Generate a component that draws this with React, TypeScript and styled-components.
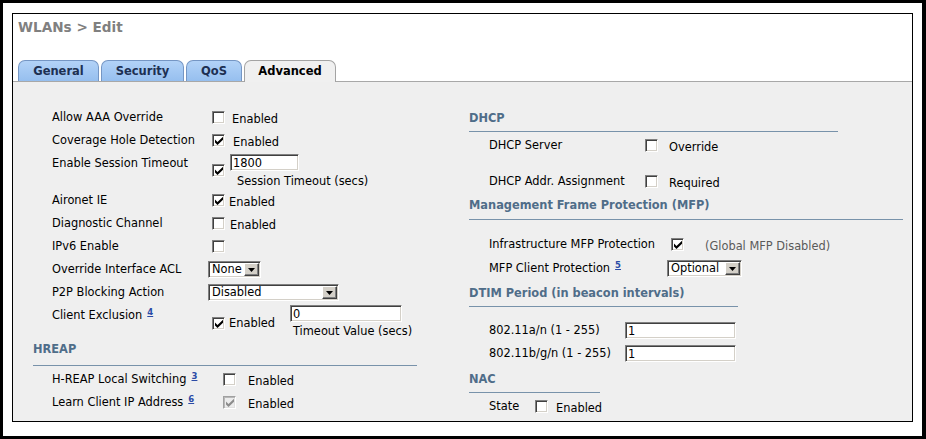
import styled, { createGlobalStyle } from 'styled-components';

const GlobalStyle = createGlobalStyle`
  html, body {
    margin: 0;
    padding: 0;
    background: #fff;
  }
  body {
    font-family: "DejaVu Sans", Verdana, sans-serif;
    font-size: 11.4px;
    color: #000;
  }
`;

const tabs = [
  { name: 'General', width: 81 },
  { name: 'Security', width: 83 },
  { name: 'QoS', width: 56 },
  { name: 'Advanced', width: 92, active: true },
];

const CheckMark = () => (
  <svg width="8" height="8" viewBox="0 0 7 7">
    <polygon points="0,2.2 2.2,4.4 7,-0.2 7,2.4 2.2,7 0,4.8" fill="currentColor" />
  </svg>
);

const Arrow = () => (
  <svg width="7" height="4" viewBox="0 0 7 4">
    <polygon points="0,0 7,0 3.5,4" fill="#000" />
  </svg>
);

const Check = ({ checked, disabled, top = 0 }: { checked?: boolean; disabled?: boolean; top?: number }) => (
  <CheckBox $disabled={disabled} $top={top}>
    {checked && <CheckMark />}
  </CheckBox>
);

const Dropdown = ({ value, width }: { value: string; width: number }) => (
  <Select $w={width}>
    <SelectText>{value}</SelectText>
    <SelectButton>
      <Arrow />
    </SelectButton>
  </Select>
);

export default function App() {
  return (
    <>
      <GlobalStyle />
      <Frame>
        <Window>
          <Title>WLANs &gt; Edit</Title>
          <TabBar>
            {tabs.map(t => (
              <Tab key={t.name} $w={t.width} $active={t.active}>{t.name}</Tab>
            ))}
          </TabBar>
          <Panel>
            <Column $w={436}>
              <Row $label={156} $h={23}>
                <Label>Allow AAA Override</Label>
                <Cell><Check /><Caption $gap={7}>Enabled</Caption></Cell>
              </Row>
              <Row $label={156} $h={23}>
                <Label>Coverage Hole Detection</Label>
                <Cell><Check checked /><Caption $gap={8}>Enabled</Caption></Cell>
              </Row>
              <Row $label={156} $h={37}>
                <Label>Enable Session Timeout</Label>
                <Stacked>
                  <Check checked top={12} />
                  <Stack $left={5}>
                    <TextField $w={69} defaultValue="1800" />
                    <SubCaption>Session Timeout (secs)</SubCaption>
                  </Stack>
                </Stacked>
              </Row>
              <Row $label={156} $h={23}>
                <Label>Aironet IE</Label>
                <Cell><Check checked /><Caption $gap={4}>Enabled</Caption></Cell>
              </Row>
              <Row $label={156} $h={23}>
                <Label>Diagnostic Channel</Label>
                <Cell><Check /><Caption $gap={5}>Enabled</Caption></Cell>
              </Row>
              <Row $label={156} $h={23}>
                <Label>IPv6 Enable</Label>
                <Cell><Check /></Cell>
              </Row>
              <Row $label={156} $h={23}>
                <Label>Override Interface ACL</Label>
                <Cell><Dropdown value="None" width={53} /></Cell>
              </Row>
              <Row $label={156} $h={23}>
                <Label>P2P Blocking Action</Label>
                <Cell><Dropdown value="Disabled" width={131} /></Cell>
              </Row>
              <Row $label={156} $h={38}>
                <Label>Client Exclusion<Sup href="#">4</Sup></Label>
                <Stacked>
                  <Check checked top={13} />
                  <FixedCaption $w={65}>Enabled</FixedCaption>
                  <Stack $left={0}>
                    <TextField $w={112} defaultValue="0" $top={1} />
                    <SubCaption $left={3} $gap={3}>Timeout Value (secs)</SubCaption>
                  </Stack>
                </Stacked>
              </Row>
              <Heading $w={384} $pad={8} $after={2}>HREAP</Heading>
              <Row $label={167} $h={23}>
                <Label>H-REAP Local Switching<Sup href="#">3</Sup></Label>
                <Cell><Check /><Caption $gap={12}>Enabled</Caption></Cell>
              </Row>
              <Row $label={167} $h={23}>
                <Label>Learn Client IP Address<Sup href="#">6</Sup></Label>
                <Cell><Check checked disabled /><Caption $gap={12}>Enabled</Caption></Cell>
              </Row>
            </Column>

            <Column>
              <Heading $w={369} $top={5} $pad={5} $after={2}>DHCP</Heading>
              <Row $label={152} $h={36} $indent={20}>
                <Label>DHCP Server</Label>
                <Cell><Check /><Caption $gap={11}>Override</Caption></Cell>
              </Row>
              <Row $label={152} $h={23} $indent={20}>
                <Label>DHCP Addr. Assignment</Label>
                <Cell><Check /><Caption $gap={11}>Required</Caption></Cell>
              </Row>
              <Heading $w={434} $top={5} $pad={6} $after={13}>Management Frame Protection (MFP)</Heading>
              <Row $label={178} $h={24} $indent={20}>
                <Label>Infrastructure MFP Protection</Label>
                <Cell><Check checked /><Caption $gap={21} $muted>(Global MFP Disabled)</Caption></Cell>
              </Row>
              <Row $label={178} $h={23} $indent={20}>
                <Label>MFP Client Protection<Sup href="#">5</Sup></Label>
                <Cell><Dropdown value="Optional" width={75} /></Cell>
              </Row>
              <Heading $w={269} $top={6} $pad={5} $after={12}>DTIM Period (in beacon intervals)</Heading>
              <Row $label={136} $h={23} $indent={20}>
                <Label>802.11a/n (1 - 255)</Label>
                <Cell><TextField $w={111} defaultValue="1" /></Cell>
              </Row>
              <Row $label={136} $h={23} $indent={20}>
                <Label>802.11b/g/n (1 - 255)</Label>
                <Cell><TextField $w={111} defaultValue="1" /></Cell>
              </Row>
              <Heading $w={131} $top={7} $pad={5} $after={2}>NAC</Heading>
              <Row $label={42} $h={23} $indent={20}>
                <Label>State</Label>
                <Cell><Check /><Caption $gap={8}>Enabled</Caption></Cell>
              </Row>
            </Column>
          </Panel>
        </Window>
      </Frame>
    </>
  );
}

const Frame = styled.div`
  width: 926px;
  height: 439px;
  box-sizing: border-box;
  border: solid #000;
  border-width: 3px 4px 3px 3px;
  padding: 10px 9px 14px 9px;
  display: flex;
`;

const Window = styled.div`
  flex: 1;
  border: 1px solid #000;
  background: #fff;
  display: flex;
  flex-direction: column;
`;

const Title = styled.div`
  height: 46px;
  box-sizing: border-box;
  padding: 5px 0 0 5px;
  font-size: 13.6px;
  line-height: 17px;
  font-weight: bold;
  color: #808080;
`;

const TabBar = styled.div`
  display: flex;
  align-items: flex-start;
  gap: 2px;
  height: 21px;
  padding-left: 5px;
`;

const Tab = styled.div<{ $w: number; $active?: boolean }>`
  position: relative;
  z-index: 1;
  width: ${p => p.$w}px;
  height: ${p => (p.$active ? 22 : 21)}px;
  box-sizing: border-box;
  display: flex;
  align-items: center;
  justify-content: center;
  padding-bottom: ${p => (p.$active ? 1 : 0)}px;
  border: 1px solid ${p => (p.$active ? '#a3a3a3' : '#7596c4')};
  border-bottom: none;
  border-radius: 7px 7px 0 0;
  background: ${p => (p.$active ? '#f0f0f0' : 'linear-gradient(#b2d2f7, #96bfef)')};
  color: ${p => (p.$active ? '#000' : '#1d3052')};
  font-size: 11.5px;
  font-weight: bold;
`;

const Panel = styled.div`
  flex: 1;
  display: flex;
  background: #efefef;
  border-top: 1px solid #a8a8a8;
  padding: 24px 0 0 20px;
`;

const Column = styled.div<{ $w?: number }>`
  display: flex;
  flex-direction: column;
  width: ${p => (p.$w ? `${p.$w}px` : 'auto')};
  flex: ${p => (p.$w ? 'none' : '1')};
`;

const Row = styled.div<{ $label: number; $h: number; $indent?: number }>`
  display: grid;
  grid-template-columns: ${p => p.$label}px auto;
  align-items: start;
  height: ${p => p.$h}px;
  padding-left: ${p => p.$indent ?? 19}px;
`;

const Label = styled.div`
  line-height: 23px;
  white-space: nowrap;
`;

const Sup = styled.a`
  position: relative;
  top: -4px;
  margin-left: 5px;
  font-size: 8.5px;
  font-weight: bold;
  color: #2b4ba6;
  text-decoration: underline;
`;

const Cell = styled.div`
  display: flex;
  align-items: center;
  height: 23px;
`;

const Stacked = styled.div`
  display: flex;
  align-items: flex-start;
`;

const Stack = styled.div<{ $left: number }>`
  display: flex;
  flex-direction: column;
  margin-left: ${p => p.$left}px;
  padding-top: 2px;
`;

const CheckBox = styled.span<{ $disabled?: boolean; $top: number }>`
  display: inline-flex;
  align-items: center;
  justify-content: center;
  width: 13px;
  height: 13px;
  box-sizing: border-box;
  margin: ${p => p.$top}px 0 0 4px;
  background: ${p => (p.$disabled ? '#ececec' : '#fff')};
  color: ${p => (p.$disabled ? '#8c8c8c' : '#000')};
  border: 1px solid;
  border-color: ${p => (p.$disabled ? '#a0a0a0 #fff #fff #a0a0a0' : '#808080 #fff #fff #808080')};
  box-shadow: ${p =>
    p.$disabled
      ? 'inset 1px 1px 0 #b8b8b8, inset -1px -1px 0 #e0e0e0'
      : 'inset 1px 1px 0 #404040, inset -1px -1px 0 #d4d0c8'};
`;

const Caption = styled.span<{ $gap: number; $muted?: boolean }>`
  margin-left: ${p => p.$gap}px;
  padding-top: 4px;
  line-height: 15px;
  white-space: nowrap;
  color: ${p => (p.$muted ? '#5a5a5a' : '#000')};
`;

const FixedCaption = styled.span<{ $w: number }>`
  width: ${p => p.$w}px;
  box-sizing: border-box;
  padding-left: 4px;
  margin-top: 12px;
  line-height: 15px;
`;

const SubCaption = styled.span<{ $left?: number; $gap?: number }>`
  margin: ${p => p.$gap ?? 4}px 0 0 ${p => p.$left ?? 7}px;
  line-height: 13px;
  white-space: nowrap;
`;

const TextField = styled.input<{ $w: number; $top?: number }>`
  width: ${p => p.$w}px;
  height: 17px;
  box-sizing: border-box;
  margin: ${p => (p.$top ? p.$top - 2 : 0)}px 0 0 0;
  padding: 0 2px;
  font: inherit;
  line-height: 15px;
  color: #000;
  background: #fff;
  border: 1px solid;
  border-color: #808080 #fff #fff #808080;
  box-shadow: inset 1px 1px 0 #404040, inset -1px -1px 0 #d4d0c8;
  outline: none;
`;

const Select = styled.div<{ $w: number }>`
  display: inline-flex;
  align-items: center;
  width: ${p => p.$w}px;
  height: 17px;
  box-sizing: border-box;
  padding: 1px;
  background: #fff;
  border: 1px solid;
  border-color: #808080 #fff #fff #808080;
  box-shadow: inset 1px 1px 0 #404040, inset -1px -1px 0 #d4d0c8;
`;

const SelectText = styled.span`
  flex: 1;
  padding-left: 2px;
  line-height: 13px;
  white-space: nowrap;
  overflow: hidden;
`;

const SelectButton = styled.span`
  display: flex;
  align-items: center;
  justify-content: center;
  width: 15px;
  height: 13px;
  box-sizing: border-box;
  background: #d4d0c8;
  border: 1px solid;
  border-color: #fff #404040 #404040 #fff;
  box-shadow: inset -1px -1px 0 #808080;
`;

const Heading = styled.div<{ $w: number; $top?: number; $pad: number; $after: number }>`
  width: ${p => p.$w}px;
  margin-top: ${p => p.$top ?? 0}px;
  margin-bottom: ${p => p.$after}px;
  padding-bottom: ${p => p.$pad}px;
  border-bottom: 1px solid #7892aa;
  line-height: 15px;
  font-weight: bold;
  color: #4f6d89;
`;
